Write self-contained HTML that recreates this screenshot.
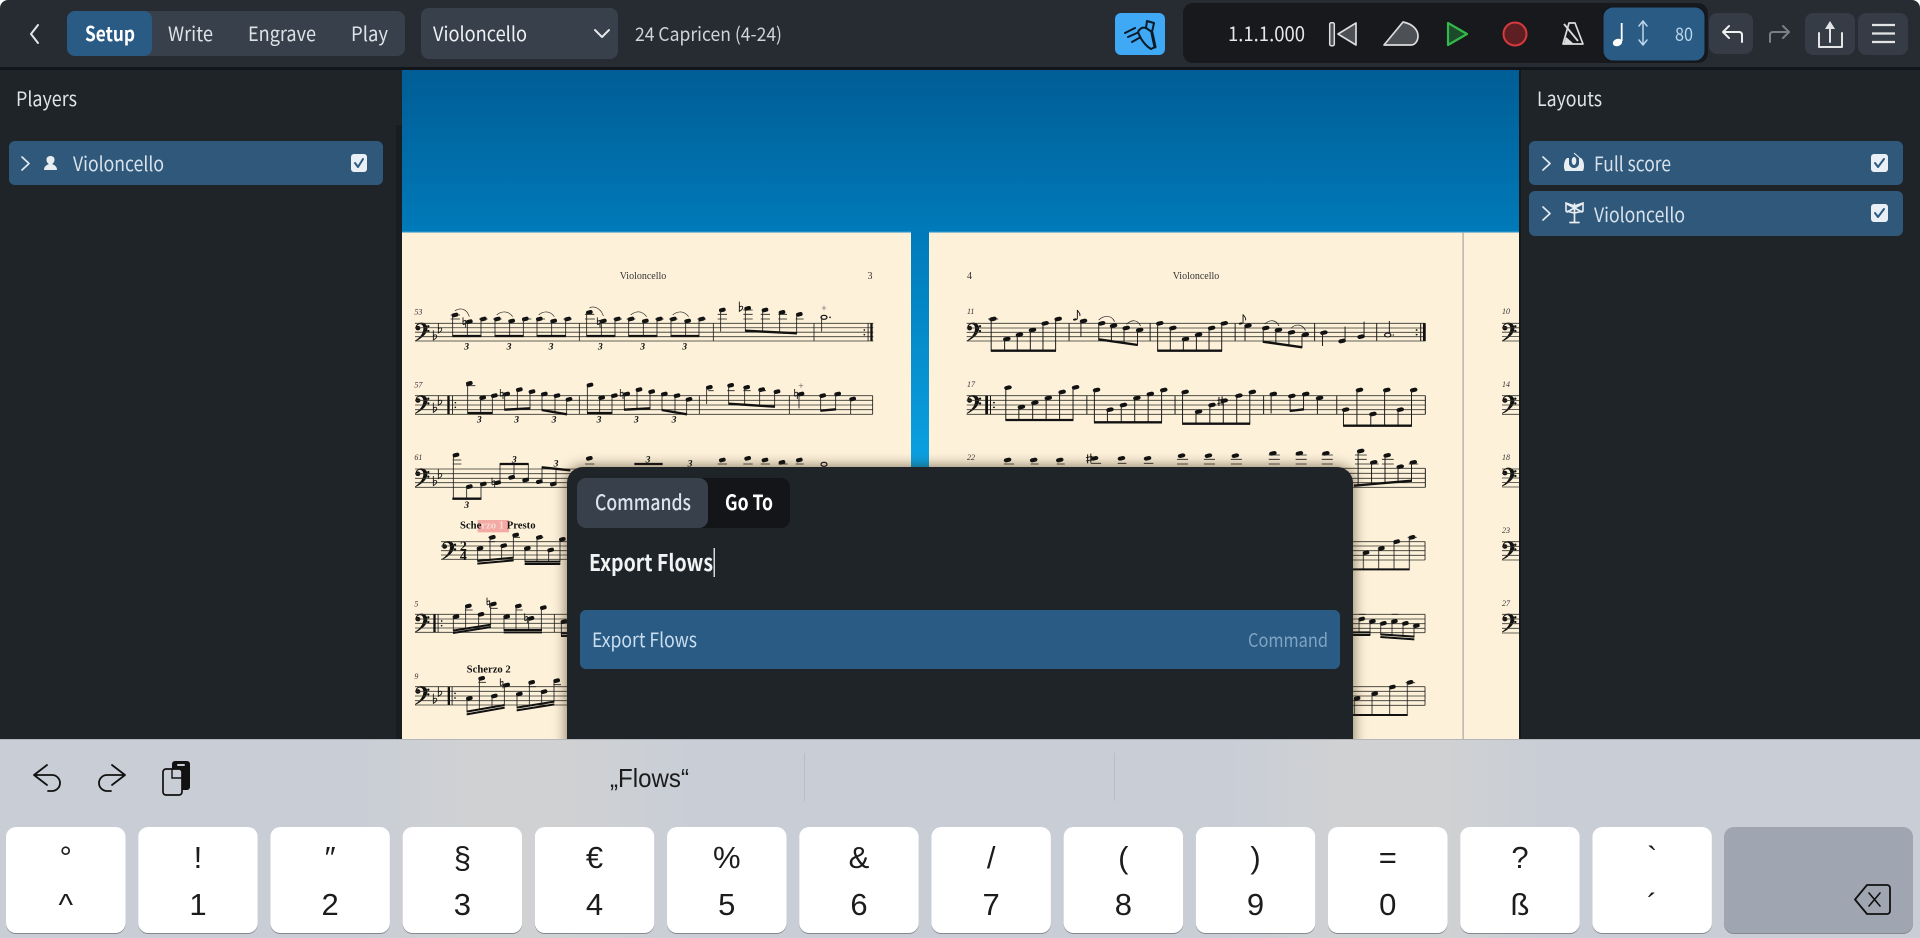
<!DOCTYPE html>
<html><head><meta charset="utf-8"><title>Dorico</title>
<style>
html,body{margin:0;padding:0;background:#fff;width:1920px;height:938px;overflow:hidden}
svg{display:block;position:absolute;left:0;top:0}
text{font-family:"Noto Sans CJK JP","Liberation Sans",sans-serif}
.l{stroke:#35342c;stroke-width:2.4;fill:none}
.s{stroke:#1c1c1c;stroke-width:2.5;fill:none}
.h{stroke:#111;stroke-width:12;stroke-linecap:round;fill:none}
.b{stroke:#111;stroke-width:7;fill:none}
.r{stroke:#222;stroke-width:2;fill:none}
.o{stroke:#111;stroke-width:3;fill:#fdf1da}
.ac{stroke:#111;stroke-width:2.6;fill:none}
text.n{font-family:"Liberation Serif",serif;font-style:italic;font-size:24px;fill:#333}
text.tu{font-family:"Liberation Serif",serif;font-style:italic;font-weight:bold;font-size:29px;fill:#111;text-anchor:middle}
text.hd{font-family:"Liberation Serif",serif;font-size:10px;fill:#333}
text.m{font-family:"Liberation Serif",serif;font-style:italic;font-size:8px;fill:#333}
text.tp{font-family:"Liberation Serif",serif;font-weight:bold;font-size:32px;fill:#111}
text.ts{font-family:"Liberation Serif",serif;font-weight:bold;font-size:42px;fill:#111;text-anchor:middle}
.i{fill:none;stroke-linecap:round;stroke-linejoin:round}
text.k{font-family:"Liberation Sans",sans-serif;font-size:31px;fill:#1c1c1c;text-anchor:middle}
.blur{filter:blur(.35px)}
</style></head><body>
<svg width="1920" height="938" viewBox="0 0 1920 938" xmlns="http://www.w3.org/2000/svg">
<defs>
<linearGradient id="sky" gradientUnits="userSpaceOnUse" x1="0" y1="70" x2="0" y2="739"><stop offset="0" stop-color="#005d95"/><stop offset=".242" stop-color="#007ab9"/><stop offset=".6" stop-color="#0ba2e2"/><stop offset="1" stop-color="#10aeea"/></linearGradient>
<linearGradient id="kb" gradientUnits="userSpaceOnUse" x1="0" y1="0" x2="1920" y2="0"><stop offset="0" stop-color="#c8cdd6"/><stop offset=".18" stop-color="#c8cdd6"/><stop offset=".24" stop-color="#cfd1d3"/><stop offset=".29" stop-color="#d0d1d2"/><stop offset=".36" stop-color="#c9ced6"/><stop offset=".64" stop-color="#c9ced6"/><stop offset=".7" stop-color="#d0d1d2"/><stop offset=".75" stop-color="#d0d1d2"/><stop offset=".81" stop-color="#c8cdd6"/><stop offset="1" stop-color="#c8cdd6"/></linearGradient>
<path id="c" d="M47 207C44 195 56 186 66 188C82 190 88 206 76 222C68 232 56 240 46 244L45 242C56 235 68 224 70 208C71 196 64 191 57 193C52 195 51 197 52 198C57 196 62 200 61 206C60 212 49 213 47 207ZM85 195.500a3.500 3.500 0 1 0 .01 0ZM85 209.500a3.500 3.500 0 1 0 .01 0Z" fill="#111"/>
<path id="f" class="ac" d="M0-20V9C7 5 12 1 10-4C8-8 3-7 0-3"/>
<path id="t" class="ac" d="M-4-15V6M4-6V15M-4-3L4-6M-4 7L4 4"/>
<path id="p" class="ac" d="M-4-13V14M4-15V12M-8-3L8-7M-8 7L8 3"/>
</defs>

<!-- canvas -->
<rect x="402" y="70" width="1117" height="669" fill="url(#sky)"/>
<rect x="402" y="232" width="509" height="507" fill="#fdf1da"/>
<rect x="929" y="232" width="590" height="507" fill="#fdf1da"/>
<rect x="402" y="231" width="509" height="1.5" fill="#1e8cc4"/><rect x="929" y="231" width="590" height="1.5" fill="#1e8cc4"/>
<rect x="1462.5" y="232" width="1.2" height="507" fill="#a9a69e"/>

<g class="blur">
<!-- page headers -->
<text class="hd" x="643" y="279" text-anchor="middle">Violoncello</text>
<text class="hd" x="870" y="279" text-anchor="middle">3</text>
<text class="hd" x="967" y="279">4</text>
<text class="hd" x="1196" y="279" text-anchor="middle">Violoncello</text>
<text class="m" x="967" y="314">11</text><text class="m" x="967" y="387">17</text><text class="m" x="967" y="460">22</text>
<text class="m" x="1502" y="314">10</text><text class="m" x="1502" y="387">14</text><text class="m" x="1502" y="460">18</text><text class="m" x="1502" y="533">23</text><text class="m" x="1502" y="606">27</text>

<!-- clefs -->
<g>
<use href="#c" transform="translate(400 260.0) scale(.3333)"/>
<use href="#c" transform="translate(400 332.4) scale(.3333)"/>
<use href="#c" transform="translate(400 405.7) scale(.3333)"/>
<use href="#c" transform="translate(426.7 478.4) scale(.3333)"/>
<use href="#c" transform="translate(400 551) scale(.3333)"/>
<use href="#c" transform="translate(400 623.4) scale(.3333)"/>
<use href="#c" transform="translate(951.7 260) scale(.3333)"/>
<use href="#c" transform="translate(951.7 332.4) scale(.3333)"/>
<use href="#c" transform="translate(951.7 405) scale(.3333)"/>
<use href="#c" transform="translate(1487 260) scale(.3333)"/>
<use href="#c" transform="translate(1487 332.4) scale(.3333)"/>
<use href="#c" transform="translate(1487 405) scale(.3333)"/>
<use href="#c" transform="translate(1487 478.4) scale(.3333)"/>
<use href="#c" transform="translate(1487 551) scale(.3333)"/>
</g>
<path class="l" style="stroke-width:.8" d="M1502 323.3H1519M1502 327.8H1519M1502 332.2H1519M1502 336.6H1519M1502 341H1519M1502 395.7H1519M1502 400.4H1519M1502 405H1519M1502 409.6H1519M1502 414.3H1519M1502 469H1519M1502 473.5H1519M1502 478H1519M1502 482.5H1519M1502 487H1519M1502 541.7H1519M1502 546.3H1519M1502 550.7H1519M1502 555.3H1519M1502 560H1519M1502 614.3H1519M1502 619H1519M1502 623.7H1519M1502 628.3H1519M1502 633H1519"/>

<!-- page 1: systems 53,57,61 -->
<g transform="translate(400 260) scale(.33333)">
<text class="n" x="43" y="163">53</text><text class="n" x="43" y="382">57</text><text class="n" x="43" y="600">61</text>
<path class="l" d="M45 190H1420M45 203.3H1420M45 216.6H1420M45 230H1420M45 243H1420M45 407H1418M45 421H1418M45 435H1418M45 449H1418M45 463H1418M45 627H880M45 641H880M45 655H880M45 668H880M45 682H880"/>
<use href="#f" x="115" y="210"/><use href="#f" x="100" y="231"/>
<use href="#f" x="115" y="427"/><use href="#f" x="100" y="448"/>
<use href="#f" x="115" y="647"/><use href="#f" x="100" y="668"/>
<use href="#f" x="1018" y="145"/>
<use href="#t" x="193" y="187"/><use href="#t" x="596" y="187"/>
<use href="#t" x="305" y="402"/><use href="#t" x="665" y="402"/><use href="#t" x="1188" y="402"/><use href="#t" x="280" y="668"/>
<!-- heads -->
<path class="h" d="M161 166l8-2M204 186l8-2M246 178l8-2M288 178l8-2M331 184l8-2M372 178l8-2M414 178l8-2M457 184l8-2M499 178l8-2M564 158l8-2M606 184l8-2M648 178l8-2M689 178l8-2M732 184l8-2M774 178l8-2M816 178l8-2M859 184l8-2M901 178l8-2M963 151l8-2M1039 146l8-2M1091 151l8-2M1142 158l8-2M1194 164l8-2
M204 371l8-2M244 414l8-2M279 408l8-2M316 403l8-2M354 390l8-2M392 396l8-2M429 403l8-2M467 408l8-2M503 419l8-2M566 376l8-2M601 414l8-2M639 408l8-2M676 403l8-2M713 390l8-2M751 396l8-2M789 403l8-2M827 408l8-2M863 419l8-2M924 383l8-2M988 377l8-2M1036 383l8-2M1081 390l8-2M1127 396l8-2M1199 403l8-2M1264 408l8-2M1309 403l8-2M1354 418l8-2
M164 586l8-2M204 681l8-2M246 673l8-2M289 669l8-2M331 653l8-2M373 661l8-2M414 666l8-2M456 673l8-2M564 596l8-2M963 601l8-2M1039 596l8-2M1091 601l8-2M1142 608l8-2M1194 601l8-2"/>
<!-- open notes -->
<ellipse class="o" style="stroke-width:3.5" cx="1272" cy="172" rx="9" ry="6"/><circle cx="1290" cy="172" r="2.5" fill="#111"/>
<ellipse class="o" style="stroke-width:3.5" cx="1272" cy="613" rx="9" ry="6"/>
<!-- stems + bars + ledgers -->
<path class="s" d="M158 165V228M202 185V228M243 177V228M285 177V228M329 183V228M370 177V228M411 177V228M455 183V228M497 177V228M560 157V228M604 183V228M645 177V228M686 177V228M730 183V228M771 177V228M813 177V228M857 183V228M897 177V228M962 150V215M1036 145V213M1088 150V215M1139 157V217M1190 163V220M1265 172V215M538 190V243M940 190V243M1242 190V243
M203 370V459M242 413V459M277 407V459M314 402V449M352 389V447M390 395V445M426 402V450M465 407V458M500 418V463M562 375V459M599 413V459M636 407V459M673 402V449M711 389V447M750 395V445M786 402V450M825 407V458M860 418V463M920 382V432M986 376V431M1034 382V434M1079 389V437M1124 395V440M1197 402V445M1262 407V452M1307 402V448M1352 417V463M538 407V463M898 407V463M1168 407V463M1418 407V463M160 585V718M200 680V718M243 672V718M300 668V612M342 652V612M385 660V612M426 665V622M468 672V627
M152 177h28M152 165h28M237 177h26M279 177h26M370 177h24M411 177h24M490 177h26M555 177h30M555 163h28M640 177h26M680 177h26M765 177h26M807 177h26M892 177h26M953 177h28M953 163h28M1030 177h28M1030 163h28M1030 150h28M1082 177h28M1082 163h28M1135 177h26M1135 163h26M1187 177h24M198 377h28M925 392h16M982 392h22M1030 392h22M1076 392h22M158 612h26M158 600h26M555 612h28M953 612h28M1030 612h28M1082 612h28M1135 612h28M1187 612h24"/>
<path d="M1272 137v14M1265 144h14M1203 370v14M1196 377h14" stroke="#555" stroke-width="1.6"/>
<!-- beams -->
<path class="b" d="M157 228H244M284 228H371M410 228H498M559 228H646M685 228H772M812 228H898M1035 212L1191 220M202 459H278M313 449L391 445M425 450L501 463M561 459H637M672 449L751 445M785 450L861 463M985 431L1125 440M1261 452L1308 448M157 716H244M299 612H386M425 622L511 631M703 612H788"/>
<!-- slurs -->
<path class="r" d="M165 152C185 140 202 150 208 170M290 165C305 152 325 152 338 170M416 165C430 152 450 152 463 170M568 144C585 134 605 150 610 168M692 165C708 152 725 152 740 170M818 165C834 152 852 152 866 170"/>
<!-- repeat/ends -->
<rect x="1403" y="190" width="2.5" height="53" fill="#111"/><rect x="1411" y="190" width="7" height="53" fill="#111"/><circle cx="1393" cy="210" r="2.5" fill="#111"/><circle cx="1393" cy="224" r="2.5" fill="#111"/>
<rect x="142" y="407" width="7" height="56" fill="#111"/><rect x="156" y="407" width="2.5" height="56" fill="#111"/><circle cx="166" cy="428" r="2.5" fill="#111"/><circle cx="166" cy="442" r="2.5" fill="#111"/>
<!-- tuplets -->
<text class="tu" x="200" y="268">3</text><text class="tu" x="327" y="268">3</text><text class="tu" x="453" y="268">3</text><text class="tu" x="601" y="268">3</text><text class="tu" x="728" y="268">3</text><text class="tu" x="854" y="268">3</text>
<text class="tu" x="238" y="488">3</text><text class="tu" x="350" y="488">3</text><text class="tu" x="462" y="488">3</text><text class="tu" x="597" y="488">3</text><text class="tu" x="709" y="488">3</text><text class="tu" x="822" y="488">3</text>
<text class="tu" x="343" y="607">3</text><text class="tu" x="468" y="619">3</text><text class="tu" x="744" y="607">3</text><text class="tu" x="870" y="619">3</text>
</g>

<!-- page 1: lower systems -->
<g transform="translate(400 480) scale(.33333)">
<text class="tu" x="200" y="84">3</text>
<rect x="233" y="120" width="94" height="37" fill="#f4aaa4"/>
<text class="tp" x="180" y="145">Sche<tspan fill="#f6d9d4">rzo 1 </tspan>Presto</text>
<path class="l" d="M123 185H520M123 198H520M123 212H520M123 225H520M123 238H520M45 403H520M45 417H520M45 430H520M45 444H520M45 457H520M45 620H520M45 634H520M45 648H520M45 662H520M45 675H520"/>
<text class="ts" x="190" y="212">2</text><text class="ts" x="190" y="240">4</text>
<text class="n" x="43" y="380">5</text><text class="n" x="43" y="597">9</text>
<text class="tp" x="200" y="577">Scherzo 2</text>
<use href="#f" x="115" y="640"/><use href="#f" x="100" y="661"/>
<use href="#t" x="265" y="368"/><use href="#t" x="378" y="415"/><use href="#t" x="305" y="610"/>
<path class="h" d="M236 206l8-2M273 173l8-2M307 198l8-2M343 166l8-2M378 206l8-2M414 173l8-2M448 211l8-2M483 179l8-2M164 411l8-2M201 379l8-2M239 404l8-2M276 373l8-2M316 411l8-2M351 379l8-2M389 416l8-2M426 384l8-2M488 426l8-2M204 656l8-2M241 596l8-2M279 649l8-2M316 616l8-2M354 643l8-2M391 608l8-2M428 636l8-2M466 603l8-2"/>
<path class="s" d="M233 205V243M270 172V240M305 197V237M340 165V233M375 205V245M411 172V245M446 210V245M480 178V245M160 410V452M197 378V447M236 403V441M272 372V434M312 410V450M348 378V450M386 415V450M424 383V450M484 425V465M463 403V457M201 655V695M238 595V688M276 648V682M313 615V675M351 642V683M388 607V677M425 635V672M462 602V665M265 185H285M265 172H285M340 172H360M410 172H430M195 390H218M270 385H293M348 390H368M235 607H258M385 620H408M460 614H483"/>
<path class="b" style="stroke-width:6" d="M232 243L341 233M232 251L341 241M374 245H481M374 252H481M159 452L273 434M159 459L273 441M311 450H426M311 457H426M200 695L314 675M200 703L314 683M350 683L463 665M350 691L463 673M483 460H520M483 468H520"/>
<rect x="100" y="403" width="7" height="54" fill="#111"/><rect x="113" y="403" width="2.5" height="54" fill="#111"/><circle cx="125" cy="423" r="2.5" fill="#111"/><circle cx="125" cy="437" r="2.5" fill="#111"/>
<rect x="143" y="620" width="7" height="55" fill="#111"/><rect x="155" y="620" width="2.5" height="55" fill="#111"/><circle cx="165" cy="640" r="2.5" fill="#111"/><circle cx="165" cy="654" r="2.5" fill="#111"/>
</g>

<!-- page 2: systems 11,17,22 -->
<g transform="translate(920 260) scale(.39541 .33333)">
<path class="l" d="M118 190H1278M118 204H1278M118 217H1278M118 230H1278M118 243H1278M118 407H1278M118 421H1278M118 435H1278M118 449H1278M118 463H1278M118 625H1278M118 640H1278M118 655H1278M118 668H1278M118 682H1278"/>
<path class="h" d="M181 178l7-2M216 238l7-2M248 225l7-2M281 211l7-2M313 191l7-2M346 178l7-2M410 184l7-2M456 191l7-2M486 198l7-2M518 205l7-2M552 211l7-2M603 191l7-2M636 205l7-2M668 238l7-2M701 225l7-2M734 205l7-2M766 191l7-2M826 198l7-2M871 205l7-2M903 211l7-2M936 218l7-2M971 225l7-2M1018 219l7-2M1064 244l7-2M1112 231l7-2
M219 384l7-2M253 442l7-2M287 429l7-2M321 415l7-2M356 397l7-2M390 383l7-2M443 391l7-2M477 450l7-2M511 436l7-2M545 415l7-2M579 403l7-2M613 391l7-2M667 397l7-2M701 456l7-2M735 436l7-2M766 423l7-2M803 408l7-2M837 397l7-2M890 403l7-2M937 409l7-2M972 403l7-2M1007 415l7-2M1073 450l7-2M1108 391l7-2M1142 463l7-2M1177 391l7-2M1211 450l7-2M1245 391l7-2
M218 601l7-2M284 601l7-2M350 601l7-2M438 596l7-2M506 596l7-2M572 596l7-2M658 588l7-2M726 588l7-2M794 588l7-2M889 581l7-2M956 581l7-2M1023 581l7-2M1111 574l7-2M1144 608l7-2M1178 587l7-2M1211 621l7-2M1244 608l7-2"/>
<path class="h" style="stroke-width:6" d="M390 179l4-1M809 191l4-1"/>
<path class="s" d="M180 177V272M214 237V272M246 224V272M279 210V272M311 190V272M343 177V272M407 183V230M398 178V150M398 150c2 7 9 9 6 18M452 190V238M484 197V244M516 204V250M550 210V255M601 190V272M633 204V272M666 237V272M699 224V272M731 204V272M763 190V272M822 197V243M817 190V163M817 163c2 7 9 9 6 18M868 204V245M900 210V252M933 217V258M966 224V262M1018 218V258M1075 243V200M1123 230V185M1187 225V183M377 190V243M582 190V243M797 190V243M998 190V243M1155 190V243
M217 383V480M250 441V480M285 428V480M319 414V480M353 396V480M387 382V480M441 390V487M474 449V487M509 435V487M543 414V487M577 402V487M611 390V487M664 396V491M698 455V491M733 435V491M767 422V491M801 407V491M834 396V491M888 402V460M936 408V453M970 402V449M1005 414V463M1071 449V497M1105 390V497M1140 462V497M1175 390V497M1209 449V497M1243 390V497M422 407V463M645 407V463M869 407V463M1054 407V463M1278 407V463
M1108 573V677M1142 607V675M1176 586V672M1209 620V666M1243 607V663M1278 625V682
M172 177H198M1100 612H1130M1100 585H1130M1130 612H1160M1168 612H1198M1168 598H1198M212 612H238M280 612H300M346 612H366M432 610H458M500 610H522M566 610H590M650 612H678M650 598H678M718 612H746M718 598H746M786 612H814M786 598H814M882 612H910M882 598H910M882 585H910M950 612H978M950 598H978M950 585H978M1016 612H1044M1016 598H1044M1016 585H1044M1100 598H1130M1236 612H1260"/>
<ellipse class="o" cx="1183" cy="225" rx="8" ry="5.5"/><circle cx="1197" cy="225" r="2" fill="#111"/>
<use href="#p" x="760" y="424"/><use href="#p" x="428" y="596"/>
<path class="b" d="M179 272H344M451 238L551 255M600 272H764M867 245L967 262M216 480H388M440 487H612M663 491H835M935 453L971 448M1070 497H1244M1097 677L1244 662"/>
<path class="r" d="M452 180C465 165 485 165 492 185M522 193C535 178 550 178 558 198M872 192C885 178 900 178 908 198M938 205C950 190 968 192 975 212"/>
<rect x="1265" y="190" width="2.5" height="53" fill="#111"/><rect x="1272" y="190" width="7" height="53" fill="#111"/><circle cx="1256" cy="210" r="2.5" fill="#111"/><circle cx="1256" cy="224" r="2.5" fill="#111"/>
<rect x="165" y="407" width="7" height="56" fill="#111"/><rect x="177" y="407" width="2.5" height="56" fill="#111"/><circle cx="187" cy="428" r="2.5" fill="#111"/><circle cx="187" cy="442" r="2.5" fill="#111"/>
</g>

<!-- page 2: lower right -->
<g transform="translate(1300 480) scale(.33333)">
<path class="l" d="M140 185H375M140 198H375M140 212H375M140 226H375M140 240H375M140 403H375M140 417H375M140 431H375M140 445H375M140 458H375M140 620H375M140 634H375M140 648H375M140 662H375M140 676H375"/>
<path class="h" d="M194 219l8-2M240 206l8-2M286 186l8-2M332 173l8-2M181 418l8-2M213 425l8-2M246 431l8-2M279 425l8-2M312 431l8-2M345 438l8-2M167 656l8-2M220 642l8-2M273 622l8-2M326 608l8-2"/>
<path class="s" d="M190 218V268M236 205V268M282 185V268M328 172V268M177 417V460M210 424V465M242 430V465M276 424V468M309 430V470M342 437V472M163 655V705M216 641V705M269 621V705M322 607V705M375 185V240M375 403V458M375 620V676M323 172H350M177 403H197M275 403H295M317 608H345"/>
<path class="b" style="stroke-width:6" d="M140 268H329M140 457H211M140 465H211M241 463L343 470M241 471L343 478M140 705H323"/>
</g>
</g>

<!-- side panels -->
<rect x="0" y="70" width="402" height="669" fill="#1f2429"/>
<rect x="396" y="125" width="6" height="614" fill="#191c20"/>
<rect x="1519" y="70" width="401" height="669" fill="#1f2429"/>
<rect x="1519" y="70" width="2" height="669" fill="#16191c"/>

<!-- command panel -->
<rect x="567" y="467" width="786" height="290" rx="16" fill="#1f2429" style="filter:drop-shadow(0 0 7px rgba(50,35,10,.65))"/>

<!-- top bar -->
<rect x="0" y="0" width="1920" height="67" rx="8" fill="#272c33"/>
<rect x="0" y="10" width="1920" height="57" fill="#272c33"/>
<rect x="0" y="67" width="1920" height="3" fill="#12151a"/>

<path class="i" d="M38 25l-7 9 7 9" stroke="#e3e7ea" stroke-width="2"/>
<rect x="67" y="11" width="338" height="45" rx="8" fill="#38404b"/>
<rect x="67" y="11" width="85" height="45" rx="8" fill="#2a5b85"/>
<g font-size="20" fill="#dde2e7">
<text x="85" y="41" fill="#fff" font-weight="700" textLength="50" lengthAdjust="spacingAndGlyphs">Setup</text>
<text x="168" y="41" textLength="45" lengthAdjust="spacingAndGlyphs">Write</text>
<text x="248" y="41" textLength="68" lengthAdjust="spacingAndGlyphs">Engrave</text>
<text x="351" y="41" textLength="37" lengthAdjust="spacingAndGlyphs">Play</text>
</g>
<rect x="421" y="8" width="197" height="51" rx="8" fill="#38404b"/>
<text x="433" y="41" font-size="20" fill="#eef1f4" textLength="94" lengthAdjust="spacingAndGlyphs">Violoncello</text>
<path class="i" d="M595 30l7 7 7-7" stroke="#e3e7ea" stroke-width="2"/>
<text x="635" y="41" font-size="19" fill="#cfd4d9" textLength="147" lengthAdjust="spacingAndGlyphs">24 Capricen (4-24)</text>

<!-- run button -->
<rect x="1115" y="13" width="50" height="42" rx="6" fill="#3fa9f5"/>
<path class="i" d="M1147 21L1154 23L1152 32L1155 47L1151 49C1146 46 1141 40 1138 32C1140 28 1143 27 1146 28ZM1146 28L1152 32M1125 33l10-5M1128 37l9-4M1132 42l7-4" stroke="#0c1a26" stroke-width="2"/>
<path class="i" d="M1152 33l3 14" stroke="#0c1a26" stroke-width="3"/>

<!-- transport -->
<rect x="1183" y="3" width="525" height="60" rx="10" fill="#17191d"/>
<text x="1228" y="41" font-size="20" fill="#e6e8ea" textLength="77" lengthAdjust="spacingAndGlyphs">1.1.1.000</text>
<rect x="1329.700" y="22.700" width="4.600" height="23" rx="1.500" fill="#4d5055" stroke="#dcdcdc" stroke-width="1.500"/>
<path d="M1338 34L1356 23V45Z" fill="#4d5055" stroke="#dcdcdc" stroke-width="1.700" stroke-linejoin="round"/>
<path d="M1384 45L1403 22C1413 24 1418 30 1418 36C1418 41 1415 45 1411 45Z" fill="#4d5055" stroke="#dcdcdc" stroke-width="1.700" stroke-linejoin="round"/>
<path d="M1448 23L1467 34L1448 45Z" fill="#1c4a2b" stroke="#33b84a" stroke-width="2.200" stroke-linejoin="round"/>
<circle cx="1515" cy="34" r="11.500" fill="#5e1f22" stroke="#d63a3f" stroke-width="2"/>
<path d="M1569 23h6l8 21h-20z" fill="none" stroke="#dcdcdc" stroke-width="1.700" stroke-linejoin="round"/>
<path d="M1566 37l8 7h-10z" fill="#dcdcdc"/><path d="M1564 24l14 17" stroke="#dcdcdc" stroke-width="1.800"/>
<rect x="1603" y="7" width="102" height="54" rx="10" fill="#2a5b85" stroke="#12151a" stroke-width="1"/>
<ellipse cx="1617.500" cy="42.500" rx="4.800" ry="3.600" fill="#fff" transform="rotate(-20 1617.500 42.500)"/>
<path d="M1621.700 41V23" stroke="#fff" stroke-width="1.800"/>
<path class="i" d="M1643 21v24M1639 26l4-5 4 5M1639 40l4 5 4-5" stroke="#bcd6ea" stroke-width="1.500"/>
<text x="1675" y="41" font-size="19" fill="#bcd6ea" textLength="18" lengthAdjust="spacingAndGlyphs">80</text>

<!-- right buttons -->
<rect x="1709" y="13" width="44" height="41" rx="8" fill="#363c46"/>
<path class="i" d="M1742 42v-7q0-3-3-3h-16M1729 26l-6 6 6 6" stroke="#eef0f2" stroke-width="2"/>
<path class="i" d="M1770 42v-7q0-3 3-3h16M1783 26l6 6-6 6" stroke="#7b7f84" stroke-width="2"/>
<rect x="1805" y="13" width="50" height="42" rx="8" fill="#363c46"/>
<path class="i" d="M1830 25v17M1819 33v14h23v-14" stroke="#e2e4e6" stroke-width="2"/><path d="M1825 29l5-8 5 8z" fill="#e2e4e6"/>
<rect x="1858" y="13" width="50" height="42" rx="8" fill="#363c46"/>
<path d="M1872 25h23M1872 33.500h23M1872 42h23" stroke="#e2e4e6" stroke-width="2.200"/>

<!-- left panel content -->
<text x="16" y="106" font-size="20" fill="#dfe3e6" textLength="61" lengthAdjust="spacingAndGlyphs">Players</text>
<rect x="9" y="141" width="374" height="44" rx="6" fill="#2f587b"/>
<path class="i" d="M22 157l7 6.500-7 6.500" stroke="#e4eaf0" stroke-width="1.700"/>
<path d="M44 170c0-4 3-5 5-6-2-1-2.500-3-2.500-4.500 0-2.500 2-3.500 4-3.500s4 1 4 3.500c0 1.500-.5 3.500-2.500 4.500 2 1 5 2 5 6z" fill="#e8edf2"/>
<text x="73" y="171" font-size="20" fill="#d7e2ec" textLength="91" lengthAdjust="spacingAndGlyphs">Violoncello</text>
<rect x="351" y="154" width="16" height="18" rx="3" fill="#e9eff5"/>
<path class="i" d="M355 163l3 4 5-8" stroke="#2a5b85" stroke-width="2"/>

<!-- right panel content -->
<text x="1537" y="106" font-size="20" fill="#dfe3e6" textLength="65" lengthAdjust="spacingAndGlyphs">Layouts</text>
<rect x="1529" y="141" width="374" height="44" rx="6" fill="#2f587b"/>
<rect x="1529" y="191" width="374" height="45" rx="6" fill="#2f587b"/>
<path class="i" d="M1543 157l7 6.500-7 6.500M1543 207l7 6.500-7 6.500" stroke="#e4eaf0" stroke-width="1.700"/>
<path d="M1565 171C1563 167 1564 160 1567 158L1569 158L1569 164C1570 167 1572 168 1574 168C1576 168 1578 167 1579 164L1579 158L1581 158C1584 160 1585 167 1583 171Z" fill="#e8edf2"/>
<ellipse cx="1574" cy="161" rx="2.300" ry="4" fill="#e8edf2"/>
<path d="M1574 153l8 7" stroke="#e8edf2" stroke-width="1"/>
<path class="i" d="M1574.500 212v10M1570 222.500h9M1567 204l15 8M1582 204l-15 8M1574.500 204v8" stroke="#e8edf2" stroke-width="1.700"/>
<path d="M1566 203l8.500 3 8.500-3v8l-8.500 2-8.500-2z" fill="none" stroke="#e8edf2" stroke-width="1.600"/>
<text x="1594" y="171" font-size="20" fill="#d7e2ec" textLength="77" lengthAdjust="spacingAndGlyphs">Full score</text>
<text x="1594" y="222" font-size="20" fill="#d7e2ec" textLength="91" lengthAdjust="spacingAndGlyphs">Violoncello</text>
<rect x="1871" y="154" width="17" height="18" rx="3" fill="#e9eff5"/>
<rect x="1871" y="204" width="17" height="18" rx="3" fill="#e9eff5"/>
<path class="i" d="M1875 163l3 4 6-8M1875 213l3 4 6-8" stroke="#2a5b85" stroke-width="2"/>

<!-- command panel content -->
<rect x="577" y="478" width="213" height="50" rx="9" fill="#131518"/>
<rect x="577" y="478" width="131" height="50" rx="9" fill="#38404b"/>
<text x="595" y="510" font-size="21" font-weight="500" fill="#d9e3ec" textLength="96" lengthAdjust="spacingAndGlyphs">Commands</text>
<text x="725" y="510" font-size="21" font-weight="700" fill="#fff" textLength="48" lengthAdjust="spacingAndGlyphs">Go To</text>
<text x="589" y="571" font-size="23" font-weight="700" fill="#f0f2f4" textLength="124" lengthAdjust="spacingAndGlyphs">Export Flows</text>
<rect x="713.500" y="548" width="1.500" height="29" fill="#d4d8dc"/>
<rect x="580" y="610" width="760" height="59" rx="6" fill="#2a5b85"/>
<text x="592" y="647" font-size="20" fill="#c9deef" textLength="105" lengthAdjust="spacingAndGlyphs">Export Flows</text>
<text x="1328" y="647" font-size="19" fill="#7fa4c2" text-anchor="end" textLength="80" lengthAdjust="spacingAndGlyphs">Command</text>

<!-- keyboard -->
<rect x="0" y="739" width="1920" height="199" fill="url(#kb)"/>
<rect x="0" y="739" width="1920" height="1" fill="#b3b6bb"/>
<path class="i" d="M47 765l-13 10 13 10M34 775h18a8 8 0 0 1 0 16h-4" stroke="#111" stroke-width="1.800"/>
<path class="i" d="M112 765l13 10-13 10M125 775h-18a8 8 0 0 0 0 16h4" stroke="#111" stroke-width="1.800"/>
<rect x="172" y="761" width="18" height="29" rx="3" fill="#111"/>
<rect x="177" y="764" width="8" height="2" rx="1" fill="#c9ced6"/>
<rect x="163" y="769" width="19" height="26" rx="3" fill="#c9ced6" stroke="#111" stroke-width="1.700"/>
<path d="M172 769v9h10" fill="none" stroke="#111" stroke-width="1.400"/>
<text x="649.500" y="787" class="k" style="font-size:26px" textLength="79" lengthAdjust="spacingAndGlyphs">„Flows“</text>
<rect x="804" y="753" width="1" height="48" fill="#b9bdc4"/>
<rect x="1114" y="753" width="1" height="48" fill="#b9bdc4"/>

<g fill="#fff" style="filter:drop-shadow(0 1.500px 0 #85888f)">
<rect x="6" y="827" width="119.500" height="106" rx="10"/><rect x="138.200" y="827" width="119.500" height="106" rx="10"/><rect x="270.400" y="827" width="119.500" height="106" rx="10"/><rect x="402.600" y="827" width="119.500" height="106" rx="10"/><rect x="534.800" y="827" width="119.500" height="106" rx="10"/><rect x="667" y="827" width="119.500" height="106" rx="10"/><rect x="799.200" y="827" width="119.500" height="106" rx="10"/><rect x="931.400" y="827" width="119.500" height="106" rx="10"/><rect x="1063.600" y="827" width="119.500" height="106" rx="10"/><rect x="1195.800" y="827" width="119.500" height="106" rx="10"/><rect x="1328" y="827" width="119.500" height="106" rx="10"/><rect x="1460.200" y="827" width="119.500" height="106" rx="10"/><rect x="1592.400" y="827" width="119.500" height="106" rx="10"/>
<rect x="1724" y="827" width="189" height="106" rx="10" fill="#a0a5b2"/>
</g>
<g>
<text class="k" x="65.750" y="868">°</text><text class="k" x="65.750" y="915">^</text>
<text class="k" x="197.950" y="868">!</text><text class="k" x="197.950" y="915">1</text>
<text class="k" x="330.150" y="868">″</text><text class="k" x="330.150" y="915">2</text>
<text class="k" x="462.350" y="868">§</text><text class="k" x="462.350" y="915">3</text>
<text class="k" x="594.550" y="868">€</text><text class="k" x="594.550" y="915">4</text>
<text class="k" x="726.750" y="868">%</text><text class="k" x="726.750" y="915">5</text>
<text class="k" x="858.950" y="868">&amp;</text><text class="k" x="858.950" y="915">6</text>
<text class="k" x="991.150" y="868">/</text><text class="k" x="991.150" y="915">7</text>
<text class="k" x="1123.350" y="868">(</text><text class="k" x="1123.350" y="915">8</text>
<text class="k" x="1255.550" y="868">)</text><text class="k" x="1255.550" y="915">9</text>
<text class="k" x="1387.750" y="868">=</text><text class="k" x="1387.750" y="915">0</text>
<text class="k" x="1519.950" y="868">?</text><text class="k" x="1519.950" y="915">ß</text>
<text class="k" x="1652.150" y="868">`</text><text class="k" x="1652.150" y="915">´</text>
</g>
<path class="i" d="M1867 885h20a3 3 0 0 1 3 3v23a3 3 0 0 1-3 3h-20l-12-14.500z" stroke="#111" stroke-width="1.800"/>
<path class="i" d="M1869 893l11 13M1880 893l-11 13" stroke="#111" stroke-width="1.600"/>
</svg>
</body></html>
